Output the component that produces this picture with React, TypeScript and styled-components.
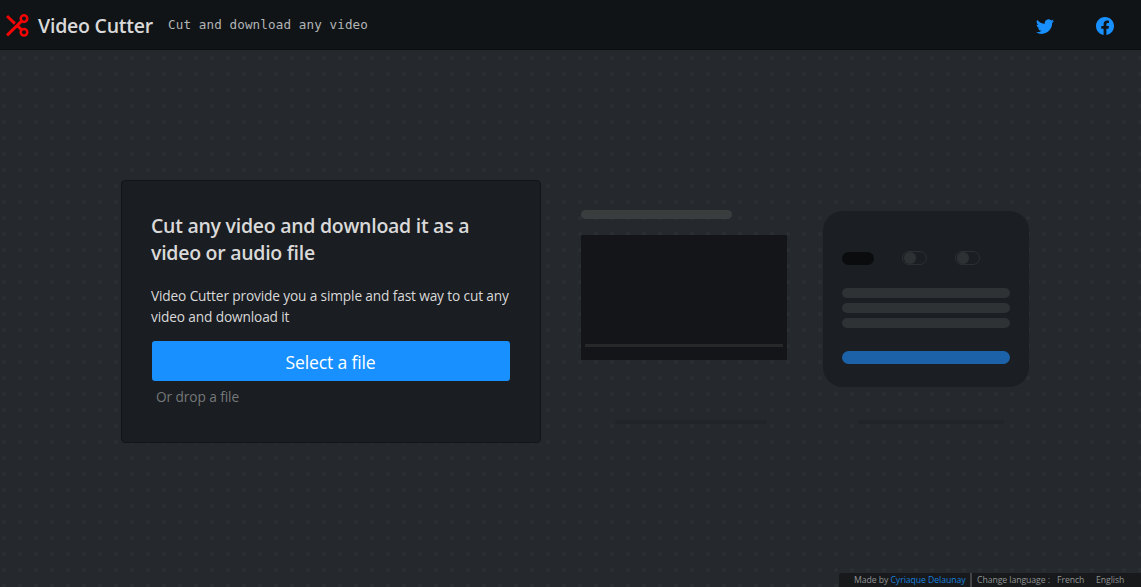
import React from "react";
import styled, { createGlobalStyle } from "styled-components";
import { BsFacebook, BsTwitter } from "react-icons/bs";

const GlobalStyle = createGlobalStyle`
  * { box-sizing: border-box; }
  body {
    margin: 0;
    background: #24282c;
    color: #d9d9d9;
    font-family: "Open Sans", "Noto Sans", sans-serif;
    font-size: 13.7px;
    overflow: hidden;
  }
`;

const Page = styled.div`
  display: flex;
  flex-direction: column;
  height: 587px;
`;

const Header = styled.header`
  display: flex;
  align-items: center;
  height: 50px;
  padding: 0 27px 0 6px;
  background: #101417;
  border-bottom: 1px solid #0d1013;
`;

const Logo = styled.svg`
  width: 23px;
  height: 23px;
  margin: 1px 9px 0 0;
  fill: none;
  stroke: #f30505;
`;

const Title = styled.h1`
  width: 130px;
  margin: 3px 0 0;
  font-size: 19.5px;
  font-weight: 600;
  line-height: 32px;
  letter-spacing: -0.23px;
  white-space: nowrap;
`;

const Tagline = styled.code`
  flex: 1;
  font-family: "DejaVu Sans Mono", monospace;
  font-size: 12.6px;
  letter-spacing: 0.11px;
  color: #b3b5b6;
`;

const Socials = styled.nav`
  display: flex;
  gap: 42px;
  margin-top: 3px;
`;

const SocialLink = styled.a`
  display: flex;
  font-size: 18px;
  color: #1890ff;
`;

const Main = styled.main`
  display: flex;
  flex: 1;
  flex-direction: column;
  min-height: 0;
  background: radial-gradient(circle at 8px 8px, #2b2f33 1.5px, transparent 2.3px) -4px 0 / 16px 16px #25292d;
`;

const Content = styled.div`
  display: flex;
  flex: 1;
  align-items: flex-start;
  padding: 130px 0 0 121px;
`;

const Card = styled.section`
  width: 420px;
  height: 263px;
  padding: 31px 30px 30px 29px;
  background: #1a1d21;
  border: 1px solid #121518;
  border-radius: 4px;
`;

const Heading = styled.h2`
  margin: 0 0 19px;
  font-size: 19.5px;
  font-weight: 600;
  line-height: 27px;
  letter-spacing: -0.27px;
  white-space: nowrap;
`;

const Description = styled.p`
  margin: 0 0 14px;
  line-height: 21px;
  letter-spacing: -0.14px;
  white-space: nowrap;
`;

const SelectButton = styled.button`
  display: block;
  width: 358px;
  height: 40px;
  margin-left: 1px;
  padding: 1px 1px 0 0;
  border: 0;
  border-radius: 3px;
  background: #1890ff;
  color: #fff;
  font: 400 17.6px/36px "Open Sans", sans-serif;
  letter-spacing: -0.16px;
`;

const DropHint = styled.p`
  margin: 5px 0 0 5px;
  line-height: 22px;
  letter-spacing: -0.09px;
  color: #75787a;
`;

const VideoPreview = styled.div`
  display: flex;
  flex-direction: column;
  width: 206px;
  margin: 30px 0 0 40px;
`;

const TitleBar = styled.div`
  width: 151px;
  height: 9px;
  border-radius: 5px;
  background: #3a3d3e;
`;

const Player = styled.div`
  display: flex;
  align-items: flex-end;
  height: 125px;
  margin-top: 16px;
  padding: 0 4px 13px;
  background: #131518;
`;

const Timeline = styled.div`
  flex: 1;
  height: 3px;
  background: #26282a;
`;

const Shadow = styled.div<{ $width: number; $top: number; $left: number }>`
  width: ${(p) => p.$width}px;
  height: 4px;
  margin: ${(p) => p.$top}px 0 0 ${(p) => p.$left}px;
  border-radius: 2px;
  background: #212529;
`;

const SettingsPreview = styled.div`
  width: 206px;
  margin: 31px 0 0 36px;
`;

const Settings = styled.div`
  height: 176px;
  padding: 40px 19px 0 19px;
  border-radius: 20px;
  background: #1b1e22;
`;

const Options = styled.div`
  display: flex;
  align-items: center;
  height: 14px;
`;

const Chip = styled.div`
  width: 32px;
  height: 13px;
  margin: 1px 28px 0 0;
  border-radius: 7px;
  background: #0b0c0e;
`;

const Toggle = styled.div`
  display: flex;
  align-items: center;
  width: 25px;
  height: 14px;
  margin-right: 28px;
  padding-left: 1px;
  border: 1px solid #2c2f32;
  border-radius: 7px;
`;

const Knob = styled.div`
  flex: none;
  width: 12px;
  height: 12px;
  border-radius: 50%;
  background: #2e3134;
`;

const Fields = styled.div`
  display: flex;
  flex-direction: column;
  gap: 5px;
  margin-top: 23px;
`;

const Field = styled.div`
  height: 10px;
  border-radius: 5px;
  background: #2f3234;
`;

const Submit = styled.div`
  height: 13px;
  margin-top: 22.5px;
  border-radius: 7px;
  background: #1b62a8;
`;

const Footer = styled.footer`
  display: flex;
  align-items: center;
  align-self: flex-end;
  width: 302px;
  height: 14px;
  padding-left: 15px;
  border-radius: 3px 0 0 0;
  background: #17191b;
  color: #929495;
  font-size: 8.7px;
  line-height: 14px;
  white-space: nowrap;
`;

const FooterItem = styled.span<{ $width: number }>`
  width: ${(p) => p.$width}px;
  letter-spacing: -0.07px;
`;

const AuthorLink = styled.a`
  color: #1880df;
`;

const Divider = styled.span`
  width: 2px;
  height: 14px;
  margin-right: 5px;
  background: #424446;
`;

export default function App() {
  return (
    <>
      <GlobalStyle />
      <Page>
        <Header>
          <Logo viewBox="0 0 23 23" strokeWidth="2.5">
            <circle cx="18" cy="4.6" r="3.3" />
            <circle cx="18" cy="18.2" r="3.3" />
            <path d="M15.6 7.1L1 21.3M1 2l7.9 7.6M11.7 12l4 3.8" strokeWidth="3" />
          </Logo>
          <Title>Video Cutter</Title>
          <Tagline>Cut and download any video</Tagline>
          <Socials>
            <SocialLink aria-label="Twitter"><BsTwitter /></SocialLink>
            <SocialLink aria-label="Facebook"><BsFacebook /></SocialLink>
          </Socials>
        </Header>
        <Main>
          <Content>
            <Card>
              <Heading>Cut any video and download it as a<br />video or audio file</Heading>
              <Description>
                Video Cutter provide you a simple and fast way to cut any<br />
                video and download it
              </Description>
              <SelectButton>Select a file</SelectButton>
              <DropHint>Or drop a file</DropHint>
            </Card>
            <VideoPreview>
              <TitleBar />
              <Player><Timeline /></Player>
              <Shadow $width={152} $top={60} $left={34} />
            </VideoPreview>
            <SettingsPreview>
              <Settings>
                <Options>
                  <Chip />
                  <Toggle><Knob /></Toggle>
                  <Toggle><Knob /></Toggle>
                </Options>
                <Fields>
                  <Field />
                  <Field />
                  <Field />
                </Fields>
                <Submit />
              </Settings>
              <Shadow $width={146} $top={33} $left={35} />
            </SettingsPreview>
          </Content>
          <Footer>
            <FooterItem $width={116}>Made by <AuthorLink>Cyriaque Delaunay</AuthorLink></FooterItem>
            <Divider />
            <FooterItem $width={80}>Change language :</FooterItem>
            <FooterItem $width={39}>French</FooterItem>
            <FooterItem $width={30}>English</FooterItem>
          </Footer>
        </Main>
      </Page>
    </>
  );
}
